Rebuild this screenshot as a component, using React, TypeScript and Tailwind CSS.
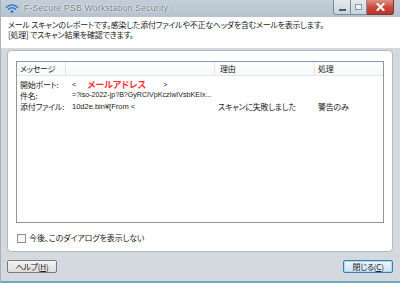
import React from "react";

const jp = "font-['Noto_Sans_CJK_JP','Noto_Sans',sans-serif] [font-feature-settings:'palt']";

function FsIcon() {
  return (
    <svg width="14" height="12" viewBox="0 0 14 12">
      <g fill="none" stroke="#2f7fd0" strokeWidth="1.6" strokeLinecap="round">
        <path d="M1.5 5.2 Q7 0.8 12.5 5.2" />
        <path d="M3.5 7.2 Q7 4.4 10.5 7.2" />
      </g>
      <circle cx="7" cy="9.6" r="1.4" fill="#2f7fd0" />
    </svg>
  );
}

export default function App() {
  return (
    <div className={`w-[400px] h-[283px] flex flex-col bg-[#d3d9df] overflow-hidden border-l border-[#a9b2ba] ${jp} text-[#1a1a1a]`}>
      {/* Title bar */}
      <div className="h-[17px] shrink-0 flex items-start bg-gradient-to-b from-[#c3ced8] to-[#b6c2cd]">
        <div className="ml-[4px] mt-[2px]">
          <FsIcon />
        </div>
        <span className="ml-[5px] mt-[3px] text-[8.5px] leading-[10px] tracking-[0.3px] font-['Liberation_Sans',sans-serif] text-[#6f7a84] [text-shadow:0_0_2px_#ffffff,0_0_3px_#ffffff]">
          F-Secure PSB Workstation Security
        </span>
        <div className="ml-auto mr-[6px] flex h-[15px]">
          <div className="w-[18px] h-[15px] border border-[#7d8c99] border-t-0 rounded-bl-[3px] bg-gradient-to-b from-[#e4eaef] to-[#c9d3dc] flex items-center justify-center">
            <div className="w-[7px] h-[2px] mt-[5px] bg-white border border-[#4d5a66]" />
          </div>
          <div className="w-[16px] h-[15px] border border-l-0 border-[#7d8c99] border-t-0 bg-gradient-to-b from-[#e4eaef] to-[#c9d3dc] flex items-center justify-center">
            <div className="w-[7px] h-[6px] border border-[#8a98a5] bg-[#f2f4f6]" />
          </div>
          <div className="w-[27px] h-[15px] border border-l-0 border-[#7a3a33] border-t-0 rounded-br-[3px] bg-gradient-to-b from-[#df8f85] via-[#cc4a3d] to-[#b9352a] flex items-center justify-center">
            <svg width="9" height="8" viewBox="0 0 9 8">
              <path d="M1.5 1 L7.5 7 M7.5 1 L1.5 7" stroke="#ffffff" strokeWidth="2" strokeLinecap="square" />
            </svg>
          </div>
        </div>
      </div>

      {/* Header band */}
      <div className="h-[31px] shrink-0 bg-white pl-[7px] pt-[3px] text-[8px] leading-[9.5px] tracking-[-0.25px]">
        <p>メール スキャンのレポートです。感染した添付ファイルや不正なヘッダを含むメールを表示します。</p>
        <p>[処理] でスキャン結果を確認できます。</p>
      </div>

      {/* Body */}
      <div className="flex-1 flex flex-col pl-[6px] pr-[7px] pt-[2px]">
        <div className="h-[202px] shrink-0 bg-white border border-[#b2b8be] rounded-[4px] flex flex-col px-[8px] pt-[10px]">
          {/* list box */}
          <div className="h-[162px] shrink-0 border border-[#8e969e] flex flex-col text-[8px] leading-[11px] tracking-[-0.25px]">
            <div className="h-[14px] shrink-0 grid grid-cols-[49px_149px_100px_1fr] border-b border-[#e3e6e8] bg-gradient-to-b from-white to-[#f7f8f9]">
              <div className="pl-[3px] flex items-center border-r border-[#e3e6e8]">メッセージ</div>
              <div className="border-r border-[#e3e6e8]" />
              <div className="pl-[5px] flex items-center border-r border-[#e3e6e8]">理由</div>
              <div className="pl-[3px] flex items-center">処理</div>
            </div>
            <div className="pt-[3px] grid grid-cols-[49px_149px_100px_1fr]">
              <div className="pl-[3px] h-[11px] whitespace-nowrap">開始ポート:</div>
              <div className="pl-[6px] h-[11px] flex items-center whitespace-nowrap font-['Liberation_Sans',sans-serif] text-[7.5px] tracking-normal">
                <span>&lt;</span>
                <span className={`ml-[11px] text-[9px] font-bold text-[#ff2f2f] ${jp}`}>メールアドレス</span>
                <span className="ml-[17px]">&gt;</span>
              </div>
              <div />
              <div />

              <div className="pl-[3px] h-[11px] whitespace-nowrap">件名:</div>
              <div className="pl-[6px] h-[11px] flex items-center whitespace-nowrap font-['Liberation_Sans',sans-serif] text-[7.1px] tracking-normal">
                =?iso-2022-jp?B?GyRCIVpKczlwIVsbKEIx...
              </div>
              <div />
              <div />

              <div className="pl-[3px] h-[11px] whitespace-nowrap">添付ファイル:</div>
              <div className="pl-[6px] h-[11px] flex items-center whitespace-nowrap font-['Liberation_Sans',sans-serif] text-[7.5px] tracking-normal">
                10d2e.bin¥[From &lt;
              </div>
              <div className="pl-[3px] h-[11px] whitespace-nowrap">スキャンに失敗しました</div>
              <div className="pl-[3px] h-[11px] whitespace-nowrap">警告のみ</div>
            </div>
          </div>
          {/* checkbox */}
          <div className="mt-[10px] flex items-center ml-[1px]">
            <div className="w-[9px] h-[9px] border border-[#8f8f8f] bg-gradient-to-br from-[#f0f0f0] to-white" />
            <span className="ml-[3px] text-[8px] leading-[10px] tracking-[-0.1px]">今後、このダイアログを表示しない</span>
          </div>
        </div>

        {/* footer */}
        <div className="flex justify-between mt-[8px]">
          <button className="w-[50px] h-[13px] border border-[#7a7a7a] rounded-[2px] bg-gradient-to-b from-[#f4f4f4] to-[#dcdcdc] text-[8px] leading-[11px] tracking-[-0.25px] flex items-center justify-center">
            ヘルプ(<span className="underline">H</span>)
          </button>
          <button className="w-[50px] h-[13px] border border-[#3d7bad] rounded-[2px] bg-gradient-to-b from-[#eef6fc] to-[#cfe4f4] shadow-[inset_0_0_0_1px_#a9dbf6] text-[8px] leading-[11px] tracking-[-0.25px] flex items-center justify-center">
            閉じる(<span className="underline">C</span>)
          </button>
        </div>
      </div>
      <div className="h-[2px] shrink-0 bg-[#6aa9bf]" />
    </div>
  );
}
